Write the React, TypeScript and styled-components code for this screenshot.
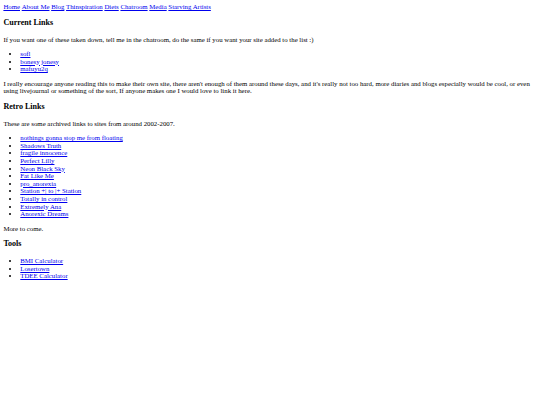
import styled, { createGlobalStyle } from 'styled-components';

const GlobalStyle = createGlobalStyle`
  html, body {
    margin: 0;
    padding: 0;
    background: #ffffff;
  }
`;

const Page = styled.div`
  padding: 3px 3.4px;
  font-family: 'Liberation Serif', 'Times New Roman', serif;
  font-size: 6.8px;
  line-height: 7.6px;
  color: #000000;
`;

const Nav = styled.nav`
  display: flex;
  gap: 1.7px;
`;

const Link = styled.a`
  color: #0000ee;
  text-decoration: underline;
`;

const Heading = styled.h3`
  font-size: 8.07px;
  line-height: 8.9px;
  font-weight: bold;
  margin: 8px 0;
`;

const Text = styled.p`
  margin: 6.9px 0;
`;

const List = styled.ul`
  margin: 6.9px 0;
  padding-left: 16.9px;
  list-style: disc;
`;

const nav = ['Home', 'About Me', 'Blog', 'Thinspiration', 'Diets', 'Chatroom', 'Media', 'Starving Artists'];
const current = ['sofl', 'bonesy jonesy', 'mafuyu2q'];
const retro = [
  'nothings gonna stop me from floating',
  'Shadows Truth',
  'fragile innocence',
  'Perfect Lilly',
  'Neon Black Sky',
  'Fat Like Me',
  'pro_anorexia',
  'Station +| to |+ Station',
  'Totally in control',
  'Extremely Ana',
  'Anorexic Dreams',
];
const tools = ['BMI Calculator', 'Losertown', 'TDEE Calculator'];

const LinkList = ({ items }: { items: string[] }) => (
  <List>
    {items.map((item) => (
      <li key={item}>
        <Link href="#">{item}</Link>
      </li>
    ))}
  </List>
);

const App = () => {
  return (
    <>
      <GlobalStyle />
      <Page>
        <Nav>
          {nav.map((item) => (
            <Link key={item} href="#">
              {item}
            </Link>
          ))}
        </Nav>
        <Heading>Current Links</Heading>
        <Text>
          If you want one of these taken down, tell me in the chatroom, do the same if you want your site added to the list :)
        </Text>
        <LinkList items={current} />
        <Text>
          I really encourage anyone reading this to make their own site, there aren't enough of them around these days, and it's
          really not too hard, more diaries and blogs especially would be cool, or even using livejournal or something of the sort,
          If anyone makes one I would love to link it here.
        </Text>
        <Heading>Retro Links</Heading>
        <Text>These are some archived links to sites from around 2002-2007.</Text>
        <LinkList items={retro} />
        <Text>More to come.</Text>
        <Heading>Tools</Heading>
        <LinkList items={tools} />
      </Page>
    </>
  );
};

export default App;
